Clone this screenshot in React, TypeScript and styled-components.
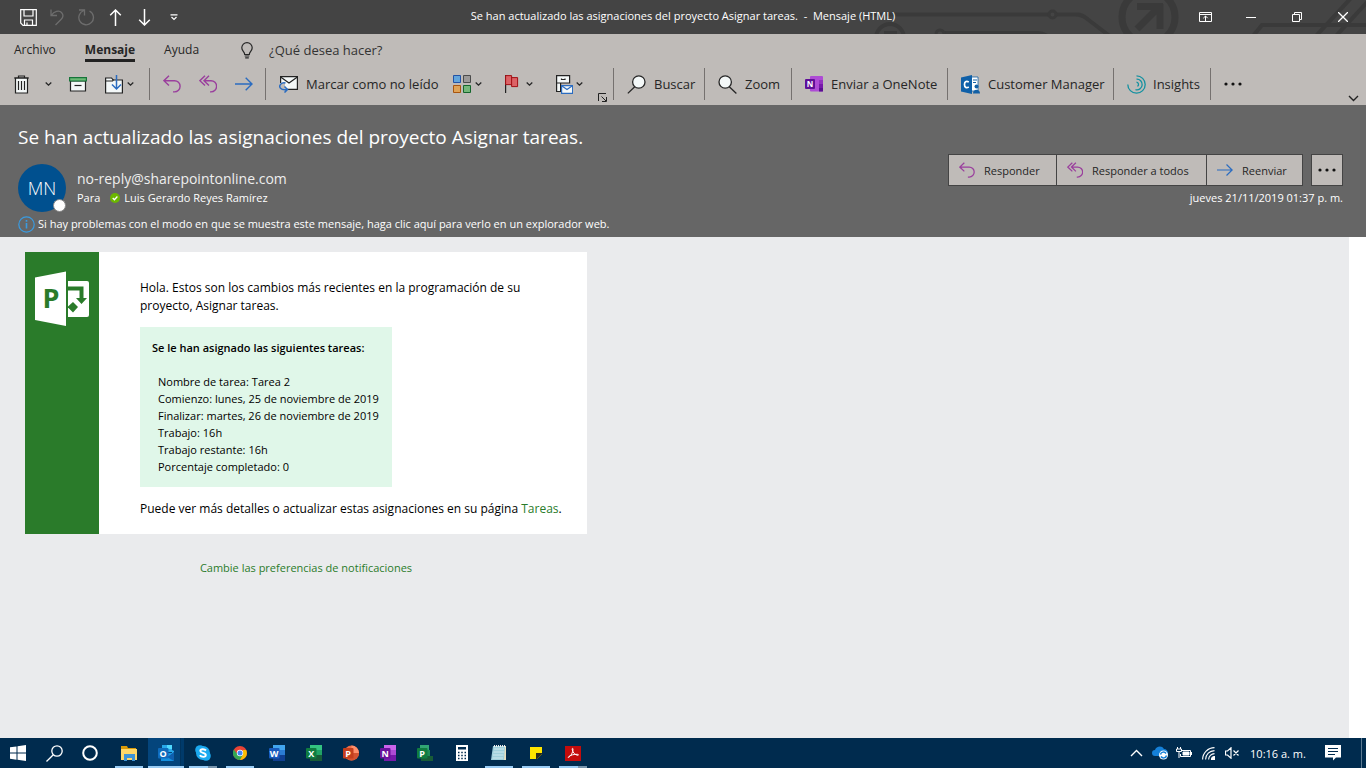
import React from 'react';
import styled, { createGlobalStyle, css } from 'styled-components';

const Global = createGlobalStyle`
  *, *::before, *::after { box-sizing: border-box; }
  body { margin: 0; background: #eaebed; }
  body, button, input { font-family: "Open Sans", "Noto Sans", sans-serif; }
  button { margin: 0; padding: 0; border: 0; background: none; color: inherit; font-size: 12px; }
  svg { display: block; flex: none; }
  h1, h2, p, dl, dt, dd { margin: 0; font-weight: 400; }
  a { color: #2a7b2a; text-decoration: none; }
`;

const Window = styled.div`
  display: flex;
  flex-direction: column;
  min-height: 100vh;
`;

/* ---------- title bar ---------- */

const TitleBar = styled.header`
  position: relative;
  display: grid;
  grid-template-columns: 1fr auto 1fr;
  align-items: center;
  height: 34px;
  background: #444;
  color: #fff;
  overflow: hidden;
`;

const Circuit = styled.svg`
  position: absolute;
  top: 0;
  right: 0;
`;

const QuickAccess = styled.div`
  position: relative;
  display: flex;
  align-items: center;
  padding-left: 14px;
`;

const QuickButton = styled.button<{ $dim?: boolean }>`
  display: flex;
  justify-content: center;
  width: 29px;
  color: ${(p) => (p.$dim ? '#6d6d6d' : '#fff')};
`;

const WindowTitle = styled.h1`
  position: relative;
  font-size: 11px;
  line-height: 16px;
  white-space: pre;
  padding-bottom: 2px;
`;

const WindowControls = styled.div`
  position: relative;
  display: flex;
  justify-content: flex-end;
`;

const ControlButton = styled.button`
  display: flex;
  align-items: center;
  justify-content: center;
  width: 46px;
  height: 32px;
`;

/* ---------- ribbon ---------- */

const Ribbon = styled.section`
  background: #bfbbb8;
  color: #262626;
  height: 71px;
`;

const Tabs = styled.nav`
  display: flex;
  align-items: flex-start;
  height: 34px;
  padding: 7px 0 0 14px;
`;

const Tab = styled.button<{ $active?: boolean }>`
  height: 21px;
  margin-right: 29px;
  font-size: 12px;
  line-height: 18px;
  border-bottom: 3px solid ${(p) => (p.$active ? '#222' : 'transparent')};
  font-weight: ${(p) => (p.$active ? 700 : 400)};
`;

const TellMe = styled.label`
  display: flex;
  align-items: center;
  gap: 16px;
  height: 18px;
  padding-left: 13px;
`;

const TellMeInput = styled.input`
  width: 200px;
  padding: 0;
  border: 0;
  outline: 0;
  background: none;
  font-size: 13px;
  color: #333;
  &::placeholder { color: #333; opacity: 1; }
`;

const Commands = styled.div`
  position: relative;
  display: flex;
  height: 32px;
`;

const Group = styled.div<{ $w: number }>`
  position: relative;
  display: flex;
  align-items: center;
  flex: none;
  width: ${(p) => p.$w}px;
  padding-left: 13px;
  border-right: 1px solid #75716f;
  &:last-of-type { border-right: 0; }
`;

const Command = styled.button<{ $gap?: number; $after?: number }>`
  display: flex;
  align-items: center;
  gap: ${(p) => p.$gap ?? 8}px;
  margin-right: ${(p) => p.$after ?? 0}px;
  font-size: 13px;
  line-height: 18px;
  white-space: nowrap;
`;

const Launcher = styled.button`
  position: absolute;
  right: 6px;
  bottom: -2px;
`;

const Collapse = styled.button`
  position: absolute;
  right: 7px;
  bottom: -2px;
`;

/* ---------- message header ---------- */

const MessageHeader = styled.section`
  display: flex;
  justify-content: space-between;
  gap: 24px;
  height: 132px;
  padding: 18px 23px 0 18px;
  background: #666;
  color: #fff;
`;

const Subject = styled.h2`
  font-size: 19px;
  line-height: 28px;
  white-space: nowrap;
`;

const Sender = styled.div`
  display: flex;
  align-items: center;
  gap: 11px;
  margin-top: 13px;
`;

const Avatar = styled.div`
  position: relative;
  flex: none;
  width: 48px;
  height: 48px;
  border-radius: 50%;
  background: #00508f;
  font-size: 18px;
  font-weight: 300;
  line-height: 48px;
  text-align: center;
`;

const Presence = styled.span`
  position: absolute;
  right: 0;
  bottom: 0;
  width: 13px;
  height: 13px;
  border: 1px solid #888;
  border-radius: 50%;
  background: #fff;
`;

const Address = styled.div`
  font-size: 14px;
  line-height: 20px;
  color: #eee;
`;

const Recipients = styled.div`
  display: flex;
  align-items: center;
  font-size: 11px;
  line-height: 18px;
  gap: 4px;
  & > span:first-child { margin-right: 6px; }
`;

const InfoBar = styled.button`
  display: flex;
  align-items: center;
  gap: 3px;
  margin-top: 3px;
  font-size: 11px;
  line-height: 18px;
  white-space: nowrap;
`;

const ReplyArea = styled.div`
  display: flex;
  flex-direction: column;
  align-items: flex-end;
  padding-top: 31px;
`;

const ReplyButtons = styled.div`
  display: flex;
`;

const ReplyButton = styled.button<{ $w: number; $apart?: boolean }>`
  display: flex;
  align-items: center;
  justify-content: ${(p) => (p.$apart ? 'center' : 'flex-start')};
  gap: 9px;
  width: ${(p) => p.$w}px;
  height: 32px;
  padding-left: ${(p) => (p.$apart ? 0 : 10)}px;
  border: 1px solid #444;
  background: #bfbbb8;
  color: #262626;
  font-size: 11px;
  white-space: nowrap;
  margin-left: ${(p) => (p.$apart ? 8 : -1)}px;
`;

const SentDate = styled.time`
  margin-top: 3px;
  font-size: 11px;
  line-height: 18px;
`;

/* ---------- message body ---------- */

const Reading = styled.main`
  flex: 1;
  padding: 15px 0 24px 25px;
  background: #eaebed;
  border-right: 17px solid #fff;
`;

const Card = styled.article`
  display: flex;
  width: 562px;
  background: #fff;
`;

const Brand = styled.div`
  flex: none;
  width: 74px;
  padding: 19px 0 0 10px;
  background: #2a7b2a;
`;

const CardText = styled.div`
  padding: 27px 0 16px 41px;
  color: #000;
`;

const Paragraph = styled.p`
  font-size: 12px;
  line-height: 18px;
  white-space: nowrap;
`;

const TaskBox = styled.section`
  width: 252px;
  margin: 12px 0 13px;
  padding: 12px 0 12px 12px;
  background: #e0f7e9;
`;

const TaskHeading = styled.h2`
  font-size: 11px;
  font-weight: 600;
  line-height: 17px;
  margin-bottom: 17px;
  white-space: nowrap;
`;

const TaskList = styled.dl`
  padding-left: 6px;
  font-size: 11px;
  line-height: 17px;
  white-space: nowrap;
  & > div { display: flex; gap: 3px; }
`;

const Preferences = styled.p`
  width: 562px;
  margin-top: 25px;
  font-size: 11px;
  line-height: 18px;
  text-align: center;
`;

/* ---------- task bar ---------- */

const TaskBar = styled.footer`
  display: flex;
  justify-content: space-between;
  height: 30px;
  background: #002b4e;
  color: #fff;
`;

const Apps = styled.div`
  display: flex;
`;

const SystemButtons = styled.div`
  display: flex;
  margin-right: 2px;
`;

const SystemButton = styled.button`
  display: flex;
  align-items: center;
  justify-content: center;
  width: 36px;
`;

const openMark = css`
  &::after {
    content: '';
    position: absolute;
    left: 5px;
    right: 4px;
    bottom: 0;
    height: 2px;
    background: #99ccf5;
  }
`;

const AppButton = styled.button<{ $state?: 'open' | 'active' | 'multi' }>`
  position: relative;
  display: flex;
  align-items: center;
  justify-content: center;
  width: 37px;
  ${(p) => p.$state && openMark}
  ${(p) => p.$state === 'active' && css`
    background: linear-gradient(90deg, transparent 1px, #04457c 1px, #04457c 33px, #002b4e 33px, #003a6a 34px);
    &::after { left: 1px; right: 0; }
  `}
  ${(p) => p.$state === 'multi' && css`
    &::after { background: linear-gradient(90deg, #99ccf5 19px, #7794ac 19px); }
  `}
`;

const Tray = styled.div`
  display: flex;
  align-items: center;
`;

const TrayButton = styled.button<{ $w?: number }>`
  display: flex;
  align-items: center;
  justify-content: center;
  width: ${(p) => p.$w ?? 24}px;
  height: 30px;
`;

const Clock = styled.time`
  width: 68px;
  margin-right: 6px;
  font-size: 11px;
  text-align: center;
  white-space: nowrap;
`;

const ShowDesktop = styled.button`
  width: 5px;
  height: 30px;
  margin-left: 13px;
  border-left: 1px solid #5c7a92;
`;

/* ---------- icons ---------- */

const Chevron = ({ w = 7 }: { w?: number }) => (
  <svg width={w} height="6" viewBox="0 0 7 6" fill="none" stroke="#262626" strokeWidth="1.3">
    <path d="M.7 1.5 3.5 4.2 6.3 1.5" />
  </svg>
);

const ReplyIcon = ({ s = 18 }: { s?: number }) => (
  <svg width={s} height={s} viewBox="0 0 18 18" fill="none" stroke="#9a3f9d" strokeWidth="1.4">
    <path d="M6 .8.9 5.7 6 10.6M1 5.7h10.500a5.600 5.600 0 0 1 0 11.200H10" />
  </svg>
);

const ReplyAllIcon = ({ s = 18 }: { s?: number }) => (
  <svg width={s} height={s} viewBox="0 0 18 18" fill="none" stroke="#9a3f9d" strokeWidth="1.4">
    <path d="M6 .8.9 5.7 6 10.6M10 .8 5 5.7l5 4.900M5 5.700h7a5.600 5.600 0 0 1 0 11.200h-1" />
  </svg>
);

const ForwardIcon = ({ s = 18 }: { s?: number }) => (
  <svg width={s} height={s} viewBox="0 0 18 18" fill="none" stroke="#2b6cc0" strokeWidth="1.4">
    <path d="M0 9h17M10.700 2.800 17 9l-6.300 6.200" />
  </svg>
);

const Dots = () => (
  <svg width="18" height="4" viewBox="0 0 18 4" fill="#111">
    <circle cx="2" cy="2" r="1.600" /><circle cx="9" cy="2" r="1.600" /><circle cx="16" cy="2" r="1.600" />
  </svg>
);

const Lens = ({ flip }: { flip?: boolean }) => (
  <svg width="19" height="19" viewBox="0 0 19 19" stroke="#262626" strokeWidth="1.3">
    {flip
      ? <><path d="M8 11.500 .8 18.400" /><circle cx="11.800" cy="7" r="6.200" fill="#f4f8f8" /></>
      : <><path d="m11 11.500 7.400 6.900" /><circle cx="7.200" cy="7" r="6.200" fill="#f4f8f8" /></>}
  </svg>
);

const tile = { fontFamily: 'Open Sans, sans-serif', fontWeight: 700, fontSize: 9, fill: '#fff', textAnchor: 'middle' as const };

const OfficeIcon = ({ letter, dark, mid, light, tile: t, round }: {
  letter: string; dark: string; mid: string; light: string; tile: string; round?: boolean;
}) => (
  <svg width="16" height="16" viewBox="0 0 16 16">
    {round ? (
      <>
        <circle cx="8.500" cy="8" r="7.500" fill={mid} />
        <path d="M8.500.500A7.500 7.500 0 0 1 16 8H8.500z" fill={light} />
        <path d="M1 8h15a7.500 7.500 0 0 1-15 0z" fill={dark} />
      </>
    ) : (
      <>
        <path d="M4 0h12v5H4z" fill={light} />
        <path d="M4 5h12v5H4z" fill={mid} />
        <path d="M4 10h12v6H4z" fill={dark} />
      </>
    )}
    <rect y="3" width="10.500" height="10.500" rx="1" fill={t} />
    <text x="5.200" y="11.500" {...tile}>{letter}</text>
  </svg>
);

const OutlookIcon = () => (
  <svg width="16" height="16" viewBox="0 0 16 16">
    <path d="M4 0h10v7H4z" fill="#28a8ea" /><path d="M9 0h5v4H9z" fill="#50d9ff" />
    <path d="M3 8h13v8H3z" fill="#1490df" /><path d="m9 12 7-5v9z" fill="#0f5fae" /><path d="m9 12 7-5v-1l-2-1v3l-5 3z" fill="#28a8ea" />
    <rect y="3" width="10.500" height="10.500" rx="1" fill="#0f6cbd" />
    <text x="5.200" y="11.500" {...tile}>O</text>
  </svg>
);

const OneNoteRibbon = () => (
  <svg width="18" height="16" viewBox="0 0 18 16">
    <rect x="5" width="13" height="15.500" rx="1" fill="#ae4bd5" />
    <path d="M14 4h4v4h-4z" fill="#9332bf" /><path d="M14 8h4v4h-4z" fill="#7719aa" /><path d="M14 12h4v3.500h-4z" fill="#5b0f91" />
    <rect y="3" width="10" height="10" rx="1" fill="#5f0f97" />
    <text x="5" y="11" {...tile} fontSize={8}>N</text>
  </svg>
);

const ProjectLogo = () => (
  <svg width="54" height="56" viewBox="0 0 54 56">
    <path d="M0 6.500 31 .500V55L0 49z" fill="#fff" />
    <text x="16" y="37" fontFamily="Open Sans, sans-serif" fontWeight="700" fontSize="27" fill="#2a7b2a" textAnchor="middle">P</text>
    <path d="M33 10h19a2 2 0 0 1 2 2v32a2 2 0 0 1-2 2H33z" fill="#fff" />
    <path d="M33 15.500h15.500V27H52l-5.500 6-5.500-6h3.500v-7.500H33z" fill="#2a7b2a" />
    <path d="m38 31 5 5-5 5.500-5-5v-1z" fill="#2a7b2a" />
  </svg>
);

export default function App() {
  return (
    <>
      <Global />
      <Window>
        <TitleBar>
          <Circuit width="496" height="34" viewBox="870 0 496 34" fill="none" stroke="#3a3a3a" strokeWidth="4" aria-hidden="true">
            <path d="M870 14.500h178m8 0h20c6 0 8 2 12 5l21 16M945 33h93c6 0 10 3 14 6" />
            <circle cx="1052.500" cy="14.500" r="3.500" strokeWidth="3" />
            <circle cx="940" cy="34" r="4" strokeWidth="3" />
            <circle cx="890" cy="38" r="14" />
            <path d="M884 33h13" />
            <circle cx="1148.500" cy="17" r="26.500" strokeWidth="7" />
            <path d="m1137 29 22-22M1137 6.500h26M1160 4v25" strokeWidth="7" />
            <path d="m1253 36 9-11h104M1316 36l35-38M1336 36l34-37" />
          </Circuit>
          <QuickAccess>
            <QuickButton aria-label="Guardar">
              <svg width="17" height="17" viewBox="0 0 17 17" fill="none" stroke="#fff" strokeWidth="1.200">
                <path d="M.7.7h15.600v15.600H3L.7 14zM4 .7v6.300h9V.7M4.500 16v-5h8v5M7 16v-2.500" />
              </svg>
            </QuickButton>
            <QuickButton $dim aria-label="Deshacer">
              <svg width="17" height="17" viewBox="0 0 17 17" fill="none" stroke="currentColor" strokeWidth="1.300">
                <path d="M2 .5v6h6M2.300 6.300C5 2.500 10 .8 12.500 3.500c2.700 2.900 1 5.500-.5 7L6.500 16" />
              </svg>
            </QuickButton>
            <QuickButton $dim aria-label="Rehacer">
              <svg width="17" height="17" viewBox="0 0 17 17" fill="none" stroke="currentColor" strokeWidth="1.300">
                <path d="M1 1h5.500v5.500M6 1.500A7.300 7.300 0 1 0 11.500 2" />
              </svg>
            </QuickButton>
            <QuickButton aria-label="Elemento anterior">
              <svg width="13" height="17" viewBox="0 0 13 17" fill="none" stroke="#fff" strokeWidth="1.500">
                <path d="M6.500 17V1M1.200 6.300 6.500 1l5.300 5.300" />
              </svg>
            </QuickButton>
            <QuickButton aria-label="Elemento siguiente">
              <svg width="13" height="17" viewBox="0 0 13 17" fill="none" stroke="#fff" strokeWidth="1.500">
                <path d="M6.500 0v16M1.200 10.700 6.500 16l5.300-5.300" />
              </svg>
            </QuickButton>
            <QuickButton aria-label="Personalizar barra de acceso rápido">
              <svg width="8" height="7" viewBox="0 0 8 7" fill="none" stroke="#fff" strokeWidth="1.200">
                <path d="M.5.8h7M1.500 3 4 5.500 6.500 3" />
              </svg>
            </QuickButton>
          </QuickAccess>
          <WindowTitle>{'Se han actualizado las asignaciones del proyecto Asignar tareas.  -  Mensaje (HTML)'}</WindowTitle>
          <WindowControls>
            <ControlButton aria-label="Opciones de presentación de la cinta">
              <svg width="13" height="10" viewBox="0 0 13 10" fill="none" stroke="#fff">
                <path d="M.5.5h12v9H.5zM.5 2.500h12M6.500 9V4M4.300 6.200 6.500 4l2.200 2.200" />
              </svg>
            </ControlButton>
            <ControlButton aria-label="Minimizar">
              <svg width="10" height="10" viewBox="0 0 10 10" stroke="#fff"><path d="M0 5.500h10" /></svg>
            </ControlButton>
            <ControlButton aria-label="Restaurar">
              <svg width="10" height="10" viewBox="0 0 10 10" fill="none" stroke="#fff">
                <path d="M.5 2.500h7v7h-7zM2.500 2.500v-2h7v7h-2" />
              </svg>
            </ControlButton>
            <ControlButton aria-label="Cerrar">
              <svg width="10" height="10" viewBox="0 0 10 10" stroke="#fff" strokeWidth="1.300"><path d="m0 0 10 10M10 0 0 10" /></svg>
            </ControlButton>
          </WindowControls>
        </TitleBar>

        <Ribbon>
          <Tabs>
            <Tab>Archivo</Tab>
            <Tab $active>Mensaje</Tab>
            <Tab>Ayuda</Tab>
            <TellMe>
              <svg width="12" height="17" viewBox="0 0 12 17" fill="none" stroke="#262626" strokeWidth="1.200">
                <path d="M3.700 12.500C3.700 9.500.8 9 .8 5.800a5.200 5.200 0 0 1 10.400 0c0 3.200-2.900 3.700-2.900 6.700zM3.700 14h4.600M4.200 15.800h3.600" />
              </svg>
              <TellMeInput aria-label="¿Qué desea hacer?" placeholder="¿Qué desea hacer?" />
            </TellMe>
          </Tabs>
          <Commands>
            <Group $w={150}>
              <Command aria-label="Eliminar" $gap={15} $after={17}>
                <svg width="17" height="19" viewBox="0 0 17 19" fill="none" stroke="#222" strokeWidth="1.200">
                  <path d="M2.500 3h12v15h-12z" fill="#f4f8f8" /><path d="M1 3h15M5.500 3V1h6v2M5.500 6v9M8.500 6v9M11.500 6v9" />
                </svg>
                <Chevron />
              </Command>
              <Command aria-label="Archivar" $after={18}>
                <svg width="18" height="15" viewBox="0 0 18 15" fill="none" strokeWidth="1.200">
                  <path d="M1.500 4h15v10h-15z" fill="#f4f8f8" stroke="#222" /><path d="M.6.6h16.800V4H.6z" fill="#6dba77" stroke="#16753a" /><path d="M5.500 8.500h7" stroke="#222" />
                </svg>
              </Command>
              <Command aria-label="Mover" $gap={4}>
                <svg width="18" height="19" viewBox="0 0 18 19" fill="none" strokeWidth="1.200">
                  <path d="M.6 3h6l1.500 2h9.300v13H.6z" fill="#f4f8f8" stroke="#222" /><path d="M.6 6h7l1-1.500" stroke="#222" />
                  <path d="M11.500 0v14M7 9.500l4.500 4.500L16 9.500" stroke="#2b6cc0" strokeWidth="1.500" />
                </svg>
                <Chevron />
              </Command>
            </Group>
            <Group $w={116}>
              <Command aria-label="Responder" $after={18}><ReplyIcon /></Command>
              <Command aria-label="Responder a todos" $after={18}><ReplyAllIcon /></Command>
              <Command aria-label="Reenviar"><ForwardIcon /></Command>
            </Group>
            <Group $w={348}>
              <Command $after={15}>
                <svg width="19" height="18" viewBox="0 0 19 18" fill="none" strokeWidth="1.200">
                  <path d="M1.600 1.600h16.800v12.800H1.600z" fill="#f4f8f8" stroke="#222" /><path d="m1.600 2 8.400 6 8.400-6" stroke="#222" />
                  <path d="M0 8h6v8H0z" fill="#bfbbb8" /><path d="M6.500 8C2 7-.5 11 1.500 13.200S7 14.500 8 14.500M5.500 11.500l3 3-3 3" stroke="#2b6cc0" strokeWidth="1.500" />
                </svg>
                Marcar como no leído
              </Command>
              <Command aria-label="Clasificar" $gap={4} $after={23}>
                <svg width="18" height="18" viewBox="0 0 18 18" strokeWidth="1">
                  <path d="M.5.5h7v7h-7z" fill="#62a5dc" stroke="#2352a5" /><path d="M10.500.5h7v7h-7z" fill="#9b9998" stroke="#4b4b4b" />
                  <path d="M.5 10.500h7v7h-7z" fill="#dfa357" stroke="#a8550f" /><path d="M10.500 10.500h7v7h-7z" fill="#74b77a" stroke="#15662d" />
                </svg>
                <Chevron />
              </Command>
              <Command aria-label="Seguimiento" $gap={7} $after={23}>
                <svg width="14" height="18" viewBox="0 0 14 18">
                  <path d="M.6 0v18" stroke="#222" strokeWidth="1.200" /><path d="M.6.600h6v2h6v9h-6v-2h-6z" fill="#dc6266" stroke="#a10f14" /><path d="M6.600 2v8" stroke="#a10f14" />
                </svg>
                <Chevron />
              </Command>
              <Command aria-label="Archivar mensaje" $gap={3}>
                <svg width="17" height="19" viewBox="0 0 17 19" fill="none" strokeWidth="1.200">
                  <path d="M.6.600h13v7.400h-13zM.6 8h4v8.500h-4z" fill="#f4f8f8" stroke="#222" /><path d="M5.500 3.500v1h3.500v-1" stroke="#222" />
                  <path d="M5.600 10.600h11v7.800h-11z" fill="#f4f8f8" stroke="#2b6cc0" /><path d="m6 11 5 3.500L16 11" stroke="#2b6cc0" />
                </svg>
                <Chevron />
              </Command>
              <Launcher aria-label="Más opciones">
                <svg width="9" height="9" viewBox="0 0 9 9" fill="none" stroke="#222"><path d="M.5 8V.5H8M3.500 3.500 8 8M8.500 4v4.500H4" /></svg>
              </Launcher>
            </Group>
            <Group $w={91}><Command><Lens flip />Buscar</Command></Group>
            <Group $w={87}><Command><Lens />Zoom</Command></Group>
            <Group $w={156}><Command><OneNoteRibbon />Enviar a OneNote</Command></Group>
            <Group $w={166}>
              <Command>
                <svg width="19" height="19" viewBox="0 0 19 19">
                  <path d="M9 2h8v14H9z" fill="#fff" stroke="#1360a5" strokeWidth=".8" /><path d="M12 5h4M12 7.500h3" stroke="#1360a5" />
                  <path d="M0 2.500 11 0v19L0 16.500z" fill="#0f60a8" /><circle cx="15.500" cy="11.500" r="2" fill="#1360a5" /><path d="M12 18.500c0-5 7-5 7 0z" fill="#1360a5" />
                  <path d="M7.800 7C5 5.500 3.500 7 3.500 9.500S5 13.500 7.800 12" fill="none" stroke="#fff" strokeWidth="1.700" />
                </svg>
                Customer Manager
              </Command>
            </Group>
            <Group $w={97}>
              <Command $gap={7}>
                <svg width="19" height="19" viewBox="0 0 19 19" fill="none" stroke="#1391a0" strokeWidth="1.300">
                  <path d="M9.500.8a8.700 8.700 0 1 1-8.700 8.700M9.500 4.200a5.300 5.300 0 1 1-1 10.400M9.500 7.200a2.300 2.300 0 0 1 1 4.200" />
                </svg>
                Insights
              </Command>
            </Group>
            <Group $w={60}><Command aria-label="Más comandos"><Dots /></Command></Group>
            <Collapse aria-label="Contraer la cinta">
              <svg width="11" height="7" viewBox="0 0 11 7" fill="none" stroke="#222" strokeWidth="1.400"><path d="m1 1 4.500 4.500L10 1" /></svg>
            </Collapse>
          </Commands>
        </Ribbon>

        <MessageHeader>
          <div>
            <Subject>Se han actualizado las asignaciones del proyecto Asignar tareas.</Subject>
            <Sender>
              <Avatar>MN<Presence /></Avatar>
              <div>
                <Address>no-reply@sharepointonline.com</Address>
                <Recipients>
                  <span>Para</span>
                  <svg width="10" height="10" viewBox="0 0 10 10"><circle cx="5" cy="5" r="5" fill="#6bb700" /><path d="m2.700 5 1.700 1.700 3-3.200" fill="none" stroke="#fff" strokeWidth="1.300" /></svg>
                  <span>Luis Gerardo Reyes Ramírez</span>
                </Recipients>
              </div>
            </Sender>
            <InfoBar>
              <svg width="17" height="17" viewBox="0 0 17 17" fill="none" stroke="#3a9be0" strokeWidth="1.200"><circle cx="8.500" cy="8.500" r="7.700" /><path d="M8.500 7v5.500M8.500 4v1.700" strokeWidth="1.600" /></svg>
              Si hay problemas con el modo en que se muestra este mensaje, haga clic aquí para verlo en un explorador web.
            </InfoBar>
          </div>
          <ReplyArea>
            <ReplyButtons>
              <ReplyButton $w={109}><ReplyIcon s={16} />Responder</ReplyButton>
              <ReplyButton $w={151}><ReplyAllIcon s={16} />Responder a todos</ReplyButton>
              <ReplyButton $w={97}><ForwardIcon s={16} />Reenviar</ReplyButton>
              <ReplyButton $w={32} $apart aria-label="Más acciones"><Dots /></ReplyButton>
            </ReplyButtons>
            <SentDate>jueves 21/11/2019 01:37 p. m.</SentDate>
          </ReplyArea>
        </MessageHeader>

        <Reading>
          <Card>
            <Brand><ProjectLogo /></Brand>
            <CardText>
              <Paragraph>Hola. Estos son los cambios más recientes en la programación de su<br />proyecto, Asignar tareas.</Paragraph>
              <TaskBox>
                <TaskHeading>Se le han asignado las siguientes tareas:</TaskHeading>
                <TaskList>
                  <div><dt>Nombre de tarea:</dt><dd>Tarea 2</dd></div>
                  <div><dt>Comienzo:</dt><dd>lunes, 25 de noviembre de 2019</dd></div>
                  <div><dt>Finalizar:</dt><dd>martes, 26 de noviembre de 2019</dd></div>
                  <div><dt>Trabajo:</dt><dd>16h</dd></div>
                  <div><dt>Trabajo restante:</dt><dd>16h</dd></div>
                  <div><dt>Porcentaje completado:</dt><dd>0</dd></div>
                </TaskList>
              </TaskBox>
              <Paragraph>Puede ver más detalles o actualizar estas asignaciones en su página <a href="#tareas">Tareas</a>.</Paragraph>
            </CardText>
          </Card>
          <Preferences><a href="#preferencias">Cambie las preferencias de notificaciones</a></Preferences>
        </Reading>

        <TaskBar>
          <Apps>
            <SystemButtons>
              <SystemButton aria-label="Inicio">
                <svg width="16" height="16" viewBox="0 0 16 16" fill="#fff"><path d="M0 2.300 6.500 1.400v6.200H0zM7.500 1.200 16 0v7.600H7.500zM0 8.500h6.500v6.200L0 13.800zM7.500 8.500H16V16l-8.500-1.200z" /></svg>
              </SystemButton>
              <SystemButton aria-label="Buscar en Windows">
                <svg width="17" height="17" viewBox="0 0 17 17" fill="none" stroke="#fff" strokeWidth="1.300"><circle cx="11" cy="6" r="5.200" /><path d="M7.300 9.700.5 16.500" /></svg>
              </SystemButton>
              <SystemButton aria-label="Cortana">
                <svg width="16" height="16" viewBox="0 0 16 16" fill="none" stroke="#fff" strokeWidth="2"><circle cx="8" cy="8" r="6.800" /></svg>
              </SystemButton>
            </SystemButtons>
            <AppButton $state="open" aria-label="Explorador de archivos">
              <svg width="16" height="15" viewBox="0 0 16 15"><path d="M0 0h6l1 2h8v3H0z" fill="#d99a08" /><path d="M0 3h16v11H0z" fill="#ffd868" /><path d="M3 8h11v7h-3v-3H6v3H3z" fill="#3e94d6" /></svg>
            </AppButton>
            <AppButton $state="active" aria-label="Outlook"><OutlookIcon /></AppButton>
            <AppButton $state="multi" aria-label="Skype">
              <svg width="16" height="16" viewBox="0 0 16 16"><circle cx="5" cy="5" r="4.800" fill="#1ba9ef" /><circle cx="11" cy="11" r="4.800" fill="#1ba9ef" /><circle cx="8" cy="8" r="7" fill="#1ba9ef" /><path d="M11 5.500C9.500 3.800 5.300 3.800 5.300 6s5.500 1.500 5.500 4-4.500 2.300-6 .3" fill="none" stroke="#fff" strokeWidth="1.900" /></svg>
            </AppButton>
            <AppButton $state="open" aria-label="Chrome">
              <svg width="14" height="14" viewBox="0 0 14 14"><circle cx="7" cy="7" r="7" fill="#ea4335" /><path d="M.9 3.500A7 7 0 0 0 7 14l3-5-3-2H3.500z" fill="#34a853" /><path d="M13.200 4A7 7 0 0 1 7 14l3-5.500V4z" fill="#fbbc05" /><circle cx="7" cy="7" r="3.200" fill="#fff" /><circle cx="7" cy="7" r="2.500" fill="#4285f4" /></svg>
            </AppButton>
            <AppButton aria-label="Word"><OfficeIcon letter="W" dark="#103f91" mid="#2b7cd3" light="#41a5ee" tile="#185abd" /></AppButton>
            <AppButton aria-label="Excel"><OfficeIcon letter="X" dark="#185c37" mid="#21a366" light="#33c481" tile="#107c41" /></AppButton>
            <AppButton aria-label="PowerPoint"><OfficeIcon letter="P" dark="#d35230" mid="#ed6c47" light="#ff8f6b" tile="#c43e1c" round /></AppButton>
            <AppButton aria-label="OneNote"><OfficeIcon letter="N" dark="#7719aa" mid="#ae4bd5" light="#ca64ea" tile="#6a129c" /></AppButton>
            <AppButton aria-label="Project">
              <svg width="16" height="16" viewBox="0 0 16 16"><path d="M3 0h9v10H3z" fill="#31a574" /><path d="M8 5h5v6H8z" fill="#1e8a58" /><path d="M4 11h12v5H4z" fill="#185c37" /><rect y="3" width="10.500" height="10.500" rx="1" fill="#107c41" /><text x="5.200" y="11.500" {...tile}>P</text></svg>
            </AppButton>
            <AppButton aria-label="Calculadora">
              <svg width="12" height="16" viewBox="0 0 12 16"><path d="M0 0h12v16H0z" fill="#fff" /><path d="M2 2h8v2.500H2z" fill="#002b4e" /><path d="M2 7.500h8M2 10.500h8M2 13.500h8" stroke="#002b4e" strokeWidth="1.500" strokeDasharray="1.500 1.750" /></svg>
            </AppButton>
            <AppButton $state="open" aria-label="Bloc de notas">
              <svg width="16" height="16" viewBox="0 0 16 16"><path d="M3 1h12v14H3z" fill="#e7dfbf" /><path d="M2 1h12l-1 14H0z" fill="#9fd0dc" /><path d="M3 4h10M2.500 7H13M2 10h10.500M1.500 13H12" stroke="#cfe9ef" /><path d="M3 1h12" stroke="#eee" strokeWidth="2" strokeDasharray="1 1" /></svg>
            </AppButton>
            <AppButton $state="open" aria-label="Notas rápidas">
              <svg width="12" height="12" viewBox="0 0 12 12"><path d="M0 0h12v7l-5 5H0z" fill="#ffe600" /><path d="M6 6h6v1l-5 5H6z" fill="#2c2c1c" /></svg>
            </AppButton>
            <AppButton $state="multi" aria-label="Acrobat Reader">
              <svg width="16" height="15" viewBox="0 0 16 15"><path d="M0 0h16v15H0z" fill="#c40c0c" /><path d="M3.500 11.500C6 10 8 6.500 8 3c0-1-1-.8-.8.3C8 7 10 9 13 9.300c.8 0 .6-1-.8-1C9 8.200 6 9 3.800 10.500c-.8.600-.8 1.200-.3 1z" fill="none" stroke="#fff" /></svg>
            </AppButton>
          </Apps>
          <Tray>
            <TrayButton aria-label="Mostrar iconos ocultos">
              <svg width="13" height="8" viewBox="0 0 13 8" fill="none" stroke="#fff" strokeWidth="1.400"><path d="m1 7 5.500-5.500L12 7" /></svg>
            </TrayButton>
            <TrayButton aria-label="OneDrive">
              <svg width="17" height="14" viewBox="0 0 17 14"><path d="M3 10a3 3 0 0 1 0-6c1-4 7-5 9-1 3 0 5 3 3.500 6L12 10z" fill="#1580d8" /><circle cx="11.500" cy="9" r="4.500" fill="#fff" /><path d="M8.500 8.500a3 3 0 0 1 5.500-1M14.500 9.500a3 3 0 0 1-5.500 1" stroke="#1580d8" fill="none" strokeWidth="1.500" /></svg>
            </TrayButton>
            <TrayButton aria-label="Batería">
              <svg width="16" height="12" viewBox="0 0 16 12" fill="none" stroke="#fff"><path d="M5 3.500h9.500v6H4.500V7M15.500 5v3" /><path d="M7 5h6v3H7z" fill="#fff" /><path d="M.5 2h5v2.500h-5zM1.500 0v2M4.500 0v2M3 4.500V11" /></svg>
            </TrayButton>
            <TrayButton aria-label="Red inalámbrica">
              <svg width="13" height="13" viewBox="0 0 13 13" fill="none" stroke="#fff" strokeWidth="1.100"><path d="M.6 12.500A12 12 0 0 1 12.500.600M3.600 12.500a9 9 0 0 1 8.900-8.900M6.600 12.500a6 6 0 0 1 5.900-5.900" /><path d="M9.500 12.500a3 3 0 0 1 3-3v3z" fill="#fff" /></svg>
            </TrayButton>
            <TrayButton aria-label="Volumen silenciado">
              <svg width="14" height="12" viewBox="0 0 14 12" fill="none" stroke="#fff"><path d="M.5 4h2L6 .8v10.400L2.500 8h-2zM8.500 3.500l5 5M13.500 3.500l-5 5" strokeWidth="1.200" /></svg>
            </TrayButton>
            <Clock>10:16 a. m.</Clock>
            <TrayButton aria-label="Notificaciones" $w={30}>
              <svg width="16" height="16" viewBox="0 0 16 16"><path d="M0 0h16v12.500h-5L8 15.500v-3H0z" fill="#fff" /><path d="M3 3.500h10M3 6.500h10M3 9.500h7" stroke="#002b4e" /></svg>
            </TrayButton>
            <ShowDesktop aria-label="Mostrar escritorio" />
          </Tray>
        </TaskBar>
      </Window>
    </>
  );
}
